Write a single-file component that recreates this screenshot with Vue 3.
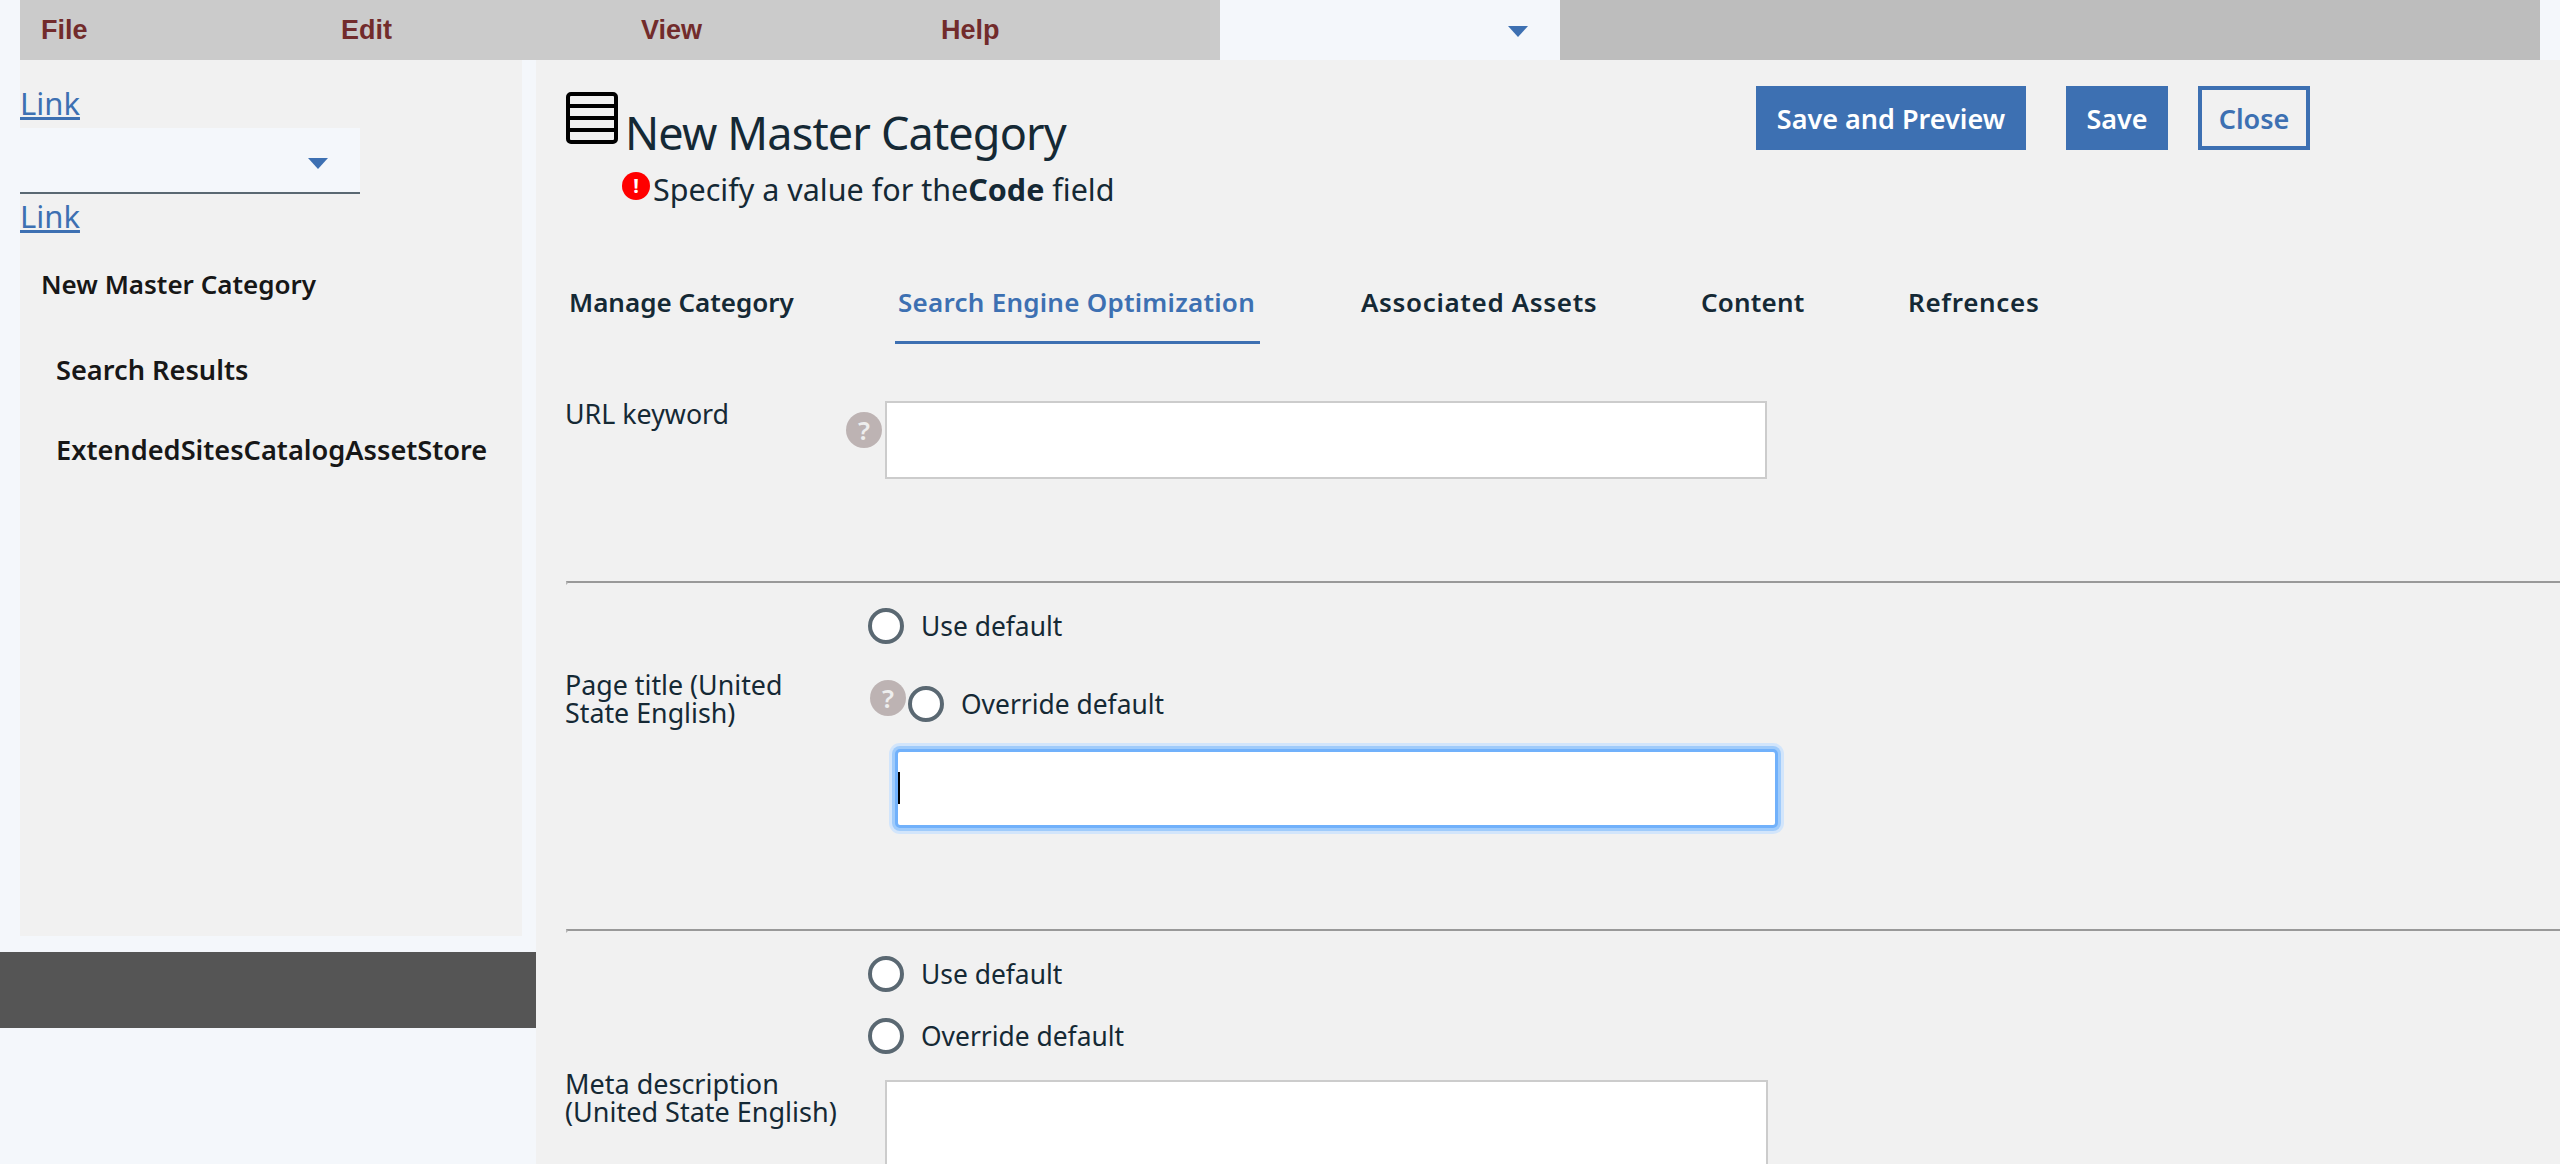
<template>
  <div class="page">
    <header class="top">
      <nav class="menu">
        <span v-for="m in menus" :key="m" class="menu-item">{{ m }}</span>
      </nav>
      <div class="top-select"><i class="tri"></i></div>
      <div class="top-fill"></div>
    </header>
    <div class="body">
      <aside class="side">
        <div class="side-card">
          <a class="link first">Link</a>
          <div class="side-select"><i class="tri"></i></div>
          <a class="link">Link</a>
          <div class="crumb">New Master Category</div>
          <div class="crumb sub first-sub">Search Results</div>
          <div class="crumb sub">ExtendedSitesCatalogAssetStore</div>
        </div>
        <div class="dark"></div>
      </aside>
      <main class="main">
        <div class="head">
          <div class="head-left">
            <div class="title-row">
              <svg class="cat" width="52" height="52" viewBox="0 0 52 52" fill="none" stroke="#000" stroke-width="4">
                <rect x="2" y="2" width="48" height="48" rx="3" />
                <path d="M2 14h48M2 26h48M2 38h48" />
              </svg>
              <h1>New Master Category</h1>
            </div>
            <div class="error">
              <span class="err-icon">!</span>
              <span class="err-text">Specify a value for the<b>Code</b> field</span>
            </div>
          </div>
          <div class="actions">
            <button class="btn primary wide">Save and Preview</button>
            <button class="btn primary save">Save</button>
            <button class="btn ghost">Close</button>
          </div>
        </div>

        <div class="tabs">
          <span v-for="(t, i) in tabs" :key="t" class="tab" :class="{ active: i === 1 }">{{ t }}</span>
        </div>

        <section class="field url">
          <label class="lbl">URL keyword</label>
          <span class="help">?</span>
          <div class="input"></div>
        </section>
        <hr />

        <section class="field title-field">
          <label class="lbl">Page title (United<br />State English)</label>
          <div class="opts">
            <div class="radio-row"><i class="radio"></i><span>Use default</span></div>
            <div class="radio-row over">
              <span class="help">?</span><i class="radio"></i><span>Override default</span>
            </div>
            <div class="focus-input"><i class="caret"></i></div>
          </div>
        </section>
        <hr />

        <section class="field meta-field">
          <div class="radio-row"><i class="radio"></i><span>Use default</span></div>
          <div class="radio-row second"><i class="radio"></i><span>Override default</span></div>
          <div class="meta-row">
            <label class="lbl">Meta description<br />(United State English)</label>
            <div class="textarea"></div>
          </div>
        </section>
      </main>
    </div>
  </div>
</template>

<script setup>
const menus = ['File', 'Edit', 'View', 'Help']
const tabs = ['Manage Category', 'Search Engine Optimization', 'Associated Assets', 'Content', 'Refrences']
</script>

<style>
html, body { margin: 0; height: 100%; overflow: hidden; background: #f4f7fb; }
</style>

<style scoped>
.page {
  width: 2560px;
  height: 1164px;
  overflow: hidden;
  background: #f4f7fb;
  color: #152935;
  font-family: "Noto Sans", "Open Sans", sans-serif;
  font-size: 28px;
}
.top { display: flex; height: 60px; padding: 0 20px; }
.menu { display: flex; width: 1200px; background: #cbcbcb; }
.menu-item {
  width: 300px;
  padding-left: 21px;
  box-sizing: border-box;
  font: bold 27px/60px "Liberation Sans", Arial, sans-serif;
  color: #722b2b;
}
.top-select { width: 340px; position: relative; background: #f4f7fb; }
.top-fill { width: 980px; background: #bdbdbd; }
.tri {
  position: absolute;
  width: 0;
  height: 0;
  border-left: 10px solid transparent;
  border-right: 10px solid transparent;
  border-top: 11px solid #3d70b2;
}
.top-select .tri { left: 288px; top: 26px; }
.body { display: flex; height: 1104px; }
.side { width: 536px; flex: none; }
.side-card {
  margin-left: 20px;
  width: 502px;
  height: 876px;
  background: #f1f1f1;
  overflow: hidden;
}
.link {
  display: block;
  font-size: 31px;
  line-height: 44px;
  color: #3d70b2;
  text-decoration: underline;
}
.link.first { margin: 20px 0 2px; line-height: 46px; }
.side-select {
  position: relative;
  width: 340px;
  height: 64px;
  background: #f4f7fb;
  border-bottom: 2px solid #5a6872;
}
.side-select .tri { left: 288px; top: 30px; }
.crumb {
  font-weight: 600;
  font-size: 26px;
  line-height: 36px;
  color: #171717;
  padding-left: 21px;
  margin-top: 28px;
}
.crumb.sub { padding-left: 36px; margin-top: 44px; font-size: 27.2px; }
.crumb.first-sub { margin-top: 50px; }
.dark { height: 76px; margin-top: 16px; background: #555; }

.main { flex: 1; background: #f1f1f1; padding-left: 30px; overflow: hidden; }
.head { display: flex; justify-content: space-between; height: 216px; }
.title-row { display: flex; padding-top: 32px; }
.cat { flex: none; }
h1 {
  margin: 13px 0 0 7px;
  font-weight: 400;
  font-size: 45px;
  letter-spacing: -0.85px;
  line-height: 56px;
  color: #152935;
}
.error { display: flex; margin: 11px 0 0 56px; align-items: flex-start; }
.err-icon {
  width: 28px;
  height: 28px;
  border-radius: 50%;
  background: #f00;
  color: #fff;
  font-size: 20px;
  font-weight: 700;
  line-height: 27px;
  text-align: center;
}
.err-text { margin: -2px 0 0 3px; font-size: 30.5px; line-height: 38px; }
.err-text b { font-weight: 700; }
.actions { display: flex; padding: 26px 250px 0 0; }
.btn {
  height: 64px;
  box-sizing: border-box;
  padding: 0;
  font-family: inherit;
  font-size: 27px;
  font-weight: 600;
  border: 4px solid #3d70b2;
}
.primary { background: #3d70b2; color: #fff; }
.ghost { background: transparent; color: #3d70b2; width: 112px; }
.wide { width: 270px; margin-right: 40px; }
.save { width: 102px; margin-right: 30px; }

.tabs { display: flex; gap: 98px; height: 68px; }
.tab {
  box-sizing: border-box;
  height: 68px;
  padding: 0 3px;
  font-size: 26px;
  font-weight: 600;
  line-height: 52px;
  color: #152935;
  white-space: nowrap;
}
.tab:nth-child(1) { width: 231px; }
.tab:nth-child(2) { width: 365px; letter-spacing: 0.25px; }
.tab:nth-child(3) { width: 242px; letter-spacing: 0.65px; }
.tab:nth-child(4) { width: 109px; letter-spacing: 0.2px; }
.tab:nth-child(5) { letter-spacing: 0.7px; }
.tab.active { color: #3d70b2; border-bottom: 3px solid #3d70b2; }

.lbl { font-size: 26.8px; line-height: 28px; color: #152935; margin-left: -1px; }
.help {
  flex: none;
  width: 36px;
  height: 36px;
  border-radius: 50%;
  background: #bdb3b3;
  color: #eee;
  font-size: 26px;
  font-weight: 600;
  line-height: 36px;
  text-align: center;
}
.field.url { display: flex; height: 237px; padding-top: 57px; box-sizing: border-box; }
.url .lbl { width: 281px; margin-top: -1px; }
.url .help { margin-top: 11px; }
.input {
  width: 882px;
  height: 78px;
  margin-left: 3px;
  box-sizing: border-box;
  background: #fff;
  border: 2px solid #ccc;
}
hr {
  margin: 0;
  height: 0;
  border-style: solid;
  border-width: 2px 0 2px 2px;
  border-color: #999 transparent #f1f1f1 #b5b5b5;
}
.title-field { display: flex; height: 344px; }
.title-field .lbl { width: 303px; padding-top: 86px; flex: none; }
.radio-row { display: flex; align-items: center; height: 36px; }
.radio {
  flex: none;
  width: 36px;
  height: 36px;
  box-sizing: border-box;
  border-radius: 50%;
  background: #fff;
  border: 4px solid #5a6872;
}
.radio-row span:last-child { margin-left: 17px; font-size: 26.4px; }
.opts { padding-top: 23px; }
.over { margin-top: 42px; }
.over .help { margin: -12px 2px 0 2px; }
.focus-input {
  position: relative;
  width: 883px;
  height: 79px;
  margin: 27px 0 0 27px;
  box-sizing: border-box;
  background: #fff;
  border: 3px solid #71b1fb;
  border-radius: 5px;
  box-shadow: 0 0 0 3px #9fcbfb, 0 0 0 6px #d2e5fb;
}
.caret { position: absolute; left: 0; top: 20px; width: 2px; height: 32px; background: #000; }
.meta-field { padding-top: 23px; }
.meta-field > .radio-row { margin-left: 302px; }
.meta-field > .second { margin-top: 26px; }
.meta-row { display: flex; margin-top: 26px; }
.meta-row .lbl { width: 320px; margin-top: -10px; flex: none; font-size: 27px; }
.textarea {
  width: 883px;
  height: 140px;
  box-sizing: border-box;
  background: #fff;
  border: 2px solid #ccc;
}
</style>
